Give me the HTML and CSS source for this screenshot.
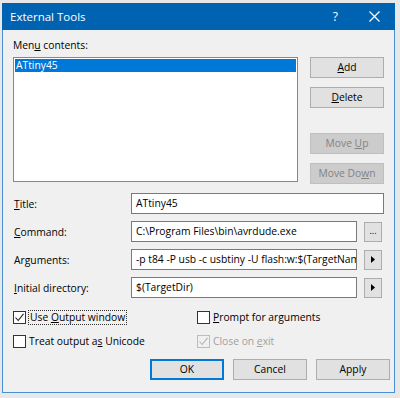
FILE: index.html
```html
<!DOCTYPE html>
<html lang="en">
<head>
  <meta charset="UTF-8" />
  <title>External Tools</title>
  <link rel="stylesheet" href="styles.css">
</head>
<body>
  <div class="window">
    <div class="titlebar">
      <span class="title">External Tools</span>
      <span class="help">?</span>
      <svg class="close" width="11" height="11" viewBox="0 0 11 11">
        <path d="M0.5 0.5 L10.5 10.5 M10.5 0.5 L0.5 10.5" stroke="#fff" stroke-width="1.2" fill="none"/>
      </svg>
    </div>

    <div class="dialog">
      <div class="menu-label">Men<u>u</u> contents:</div>
      <div class="top">
        <div class="listbox">
          <div class="item selected">ATtiny45</div>
        </div>
        <div class="side">
          <button class="btn"><u>A</u>dd</button>
          <button class="btn"><u>D</u>elete</button>
          <button class="btn disabled move-up">Move <u>U</u>p</button>
          <button class="btn disabled">Move Do<u>w</u>n</button>
        </div>
      </div>

      <div class="fields">
        <label><u>T</u>itle:</label>
        <div class="input wide">ATtiny45</div>

        <label><u>C</u>ommand:</label>
        <div class="input">C:\Program Files\bin\avrdude.exe</div>
        <button class="btn small dots">...</button>

        <label>Ar<u>g</u>uments:</label>
        <div class="input">-p t84 -P usb -c usbtiny -U flash:w:$(TargetName).hex</div>
        <button class="btn small">
          <svg width="4" height="7" viewBox="0 0 4 7"><path d="M0 0 L4 3.5 L0 7 Z" fill="#000"/></svg>
        </button>

        <label><u>I</u>nitial directory:</label>
        <div class="input">$(TargetDir)</div>
        <button class="btn small">
          <svg width="4" height="7" viewBox="0 0 4 7"><path d="M0 0 L4 3.5 L0 7 Z" fill="#000"/></svg>
        </button>
      </div>

      <div class="checks">
        <div class="check">
          <span class="box">
            <svg width="11" height="11" viewBox="0 0 11 11"><path d="M1.5 5.5 L4.2 8.5 L9.5 1.8" stroke="#222" stroke-width="1.1" fill="none"/></svg>
          </span>
          <span class="focus">Use <u>O</u>utput window</span>
        </div>
        <div class="check">
          <span class="box"></span>
          <span><u>P</u>rompt for arguments</span>
        </div>
        <div class="check">
          <span class="box"></span>
          <span>Treat output a<u>s</u> Unicode</span>
        </div>
        <div class="check off">
          <span class="box">
            <svg width="11" height="11" viewBox="0 0 11 11"><path d="M1.5 5.5 L4.2 8.5 L9.5 1.8" stroke="#b5b5b5" stroke-width="1.1" fill="none"/></svg>
          </span>
          <span>Close on <u>e</u>xit</span>
        </div>
      </div>

      <div class="footer">
        <button class="btn default">OK</button>
        <button class="btn">Cancel</button>
        <button class="btn">Apply</button>
      </div>
    </div>
  </div>
</body>
</html>
```

FILE: styles.css
```css
body {
  margin: 0;
  background: #e8e8e8;
  font-family: 'Open Sans', 'Noto Sans', sans-serif;
  font-size: 10.3px;
  color: #000;
  height: 398px;
  overflow: hidden;
}

u {
  text-decoration-thickness: 1px;
  text-underline-offset: 1px;
}

.window {
  margin: 3px 0 0 2px;
  width: 393px;
  height: 390px;
  box-sizing: border-box;
  display: flex;
  flex-direction: column;
}

.titlebar {
  height: 27px;
  background: #0063b1;
  color: #fff;
  display: flex;
  align-items: center;
  padding-left: 8px;
  flex-shrink: 0;
}

.title {
  font-size: 11.5px;
  flex: 1;
}

.help {
  font-size: 12px;
  margin-right: 31px;
}

.close {
  margin-right: 15px;
}

.dialog {
  flex: 1;
  background: #f0f0f0;
  border: 1px solid #4a8ed4;
  border-top: none;
  padding: 0 9px 0 10px;
}

.menu-label {
  margin-top: 8px;
  height: 19px;
  line-height: 14px;
}

.top {
  display: flex;
  gap: 12px;
  height: 125px;
}

.listbox {
  width: 285px;
  box-sizing: border-box;
  background: #fff;
  border: 1px solid #828790;
  padding: 1px;
}

.item {
  height: 13px;
  line-height: 13px;
  padding-left: 1px;
}

.item.selected {
  background: #0078d7;
  color: #fff;
}

.side {
  display: flex;
  flex-direction: column;
  width: 74px;
}

.btn {
  font: inherit;
  color: #000;
  background: #e1e1e1;
  border: 1px solid #adadad;
  height: 21px;
  line-height: 19px;
  padding: 0;
  text-align: center;
  white-space: nowrap;
}

.side .btn + .btn {
  margin-top: 9px;
}

.side .move-up {
  margin-top: 25px !important;
}

.btn.disabled {
  background: #cccccc;
  border-color: #bfbfbf;
  color: #838383;
}

.fields {
  display: grid;
  grid-template-columns: 111px 226px 20px;
  column-gap: 7px;
  row-gap: 7px;
  margin-top: 11px;
  align-items: center;
}

.fields label {
  padding-left: 1px;
}

.input {
  height: 21px;
  box-sizing: border-box;
  background: #fff;
  border: 1px solid #7a7a7a;
  padding: 0 4px;
  line-height: 19px;
  white-space: nowrap;
  overflow: hidden;
}

.input.wide {
  grid-column: 2 / 4;
}

.btn.small {
  width: 18px;
  height: 20px;
  display: flex;
  align-items: center;
  justify-content: center;
}

.dots {
  font-size: 9px;
  padding-bottom: 2px;
}

.checks {
  display: grid;
  grid-template-columns: 184px 1fr;
  row-gap: 10px;
  margin-top: 12px;
}

.check {
  display: flex;
  align-items: center;
  gap: 3px;
  height: 14px;
}

.box {
  width: 13px;
  height: 13px;
  box-sizing: border-box;
  border: 1px solid #333;
  background: #fff;
  display: flex;
  align-items: center;
  justify-content: center;
  flex-shrink: 0;
}

.check.off {
  color: #a0a0a0;
}

.check.off .box {
  border-color: #bcbcbc;
  background: #f0f0f0;
}

.focus {
  outline: 1px dotted #333;
  padding: 0 1px;
  line-height: 13px;
}

.footer {
  display: flex;
  justify-content: flex-end;
  gap: 9px;
  margin-top: 11px;
  margin-right: -5px;
}

.footer .btn {
  width: 74px;
  height: 21px;
}

.btn.default {
  border: 1px solid #0078d7;
  box-shadow: inset 0 0 0 1px #0078d7;
}
```
